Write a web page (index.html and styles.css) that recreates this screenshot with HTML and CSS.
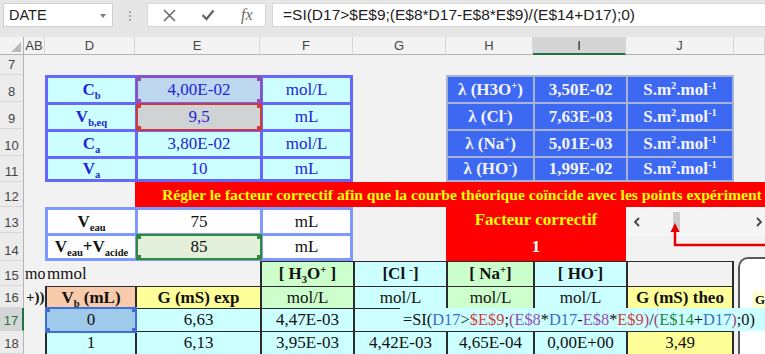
FILE: index.html
```html
<!DOCTYPE html>
<html lang="fr">
<head>
  <meta charset="UTF-8">
  <title>Dosage conductimétrique</title>
  <link rel="stylesheet" href="styles.css">
</head>
<body>

  <div class="toolbar">
    <div class="namebox">DATE<span class="caret"></span></div>
    <div class="grip"></div>
    <div class="fxbox">
      <svg class="ico-x" width="13" height="13" viewBox="0 0 13 13"><path d="M1 1L12 12M12 1L1 12" stroke="#666" stroke-width="1.5"/></svg>
      <svg class="ico-ok" width="14" height="12" viewBox="0 0 14 12"><path d="M1.5 6L5.5 10L12.5 1.5" stroke="#666" stroke-width="2.4" fill="none"/></svg>
      <span class="fx">fx</span>
    </div>
    <div class="formula">=SI(D17&gt;$E$9;(E$8*D17-E$8*E$9)/(E$14+D17);0)</div>
  </div>

  <div class="row head">
    <div class="corner"></div>
    <div class="ch">AB</div>
    <div class="ch">D</div>
    <div class="ch">E</div>
    <div class="ch">F</div>
    <div class="ch">G</div>
    <div class="ch">H</div>
    <div class="ch on">I</div>
    <div class="ch">J</div>
    <div class="ch"></div>
  </div>

  <div class="row h20">
    <div class="rh">7</div>
  </div>

  <div class="row h27">
    <div class="rh">8</div><div></div>
    <div class="c t1 lab"><span>C<sub>b</sub></span></div>
    <div class="c t1 hl hl-p">4,00E-02</div>
    <div class="c t1 r">mol/L</div>
    <div></div>
    <div class="c t2"><span>λ (H3O<sup>+</sup>)</span></div>
    <div class="c t2">3,50E-02</div>
    <div class="c t2 r"><span>S.m<sup>2</sup>.mol<sup>-1</sup></span></div>
  </div>

  <div class="row h27">
    <div class="rh">9</div><div></div>
    <div class="c t1 lab"><span>V<sub>b,eq</sub></span></div>
    <div class="c t1 hl hl-r">9,5</div>
    <div class="c t1 r">mL</div>
    <div></div>
    <div class="c t2"><span>λ (Cl<sup>-</sup>)</span></div>
    <div class="c t2">7,63E-03</div>
    <div class="c t2 r"><span>S.m<sup>2</sup>.mol<sup>-1</sup></span></div>
  </div>

  <div class="row h27">
    <div class="rh">10</div><div></div>
    <div class="c t1 lab"><span>C<sub>a</sub></span></div>
    <div class="c t1">3,80E-02</div>
    <div class="c t1 r">mol/L</div>
    <div></div>
    <div class="c t2"><span>λ (Na<sup>+</sup>)</span></div>
    <div class="c t2">5,01E-03</div>
    <div class="c t2 r"><span>S.m<sup>2</sup>.mol<sup>-1</sup></span></div>
  </div>

  <div class="row h26">
    <div class="rh">11</div><div></div>
    <div class="c t1 b lab"><span>V<sub>a</sub></span></div>
    <div class="c t1 b">10</div>
    <div class="c t1 r b">mL</div>
    <div></div>
    <div class="c t2 b"><span>λ (HO<sup>-</sup>)</span></div>
    <div class="c t2 b">1,99E-02</div>
    <div class="c t2 r b"><span>S.m<sup>2</sup>.mol<sup>-1</sup></span></div>
  </div>

  <div class="row h25">
    <div class="rh">12</div><div></div><div></div>
    <div class="band">Régler le facteur correctif afin que la courbe théorique coïncide avec les points expériment</div>
  </div>

  <div class="row h26">
    <div class="rh">13</div><div></div>
    <div class="c t3 lab"><span>V<sub>eau</sub></span></div>
    <div class="c t3">75</div>
    <div class="c t3 r">mL</div>
    <div></div>
    <div class="c red2 yel">Facteur correctif</div>
  </div>

  <div class="row h28">
    <div class="rh">14</div><div></div>
    <div class="c t3 b lab"><span>V<sub>eau</sub>+V<sub>acide</sub></span></div>
    <div class="c t3 b hl hl-g">85</div>
    <div class="c t3 r b">mL</div>
    <div></div>
    <div class="c red2 wht">1</div>
  </div>

  <div class="row h25">
    <div class="rh">15</div>
    <div class="c clip mo">mo</div>
    <div class="c left">mmol</div>
    <div></div>
    <div class="c d green lab"><span>[ H<sub>3</sub>O<sup>+</sup> ]</span></div>
    <div class="c d cyan lab"><span>[Cl <sup>-</sup>]</span></div>
    <div class="c d green lab"><span>[ Na<sup>+</sup>]</span></div>
    <div class="c d cyan lab"><span>[ HO<sup>-</sup>]</span></div>
    <div class="c d r"></div>
  </div>

  <div class="row h22">
    <div class="rh">16</div>
    <div class="c clip plus">+))<span class="tick"></span></div>
    <div class="c d orange lab"><span>V<sub>b</sub> (mL)</span></div>
    <div class="c d yellow lab">G (mS) exp</div>
    <div class="c d green">mol/L</div>
    <div class="c d cyan">mol/L</div>
    <div class="c d green">mol/L</div>
    <div class="c d cyan">mol/L</div>
    <div class="c d r yellow lab">G (mS) theo</div>
  </div>

  <div class="row h23">
    <div class="rh on">17</div><div></div>
    <div class="c d hl hl-b">0</div>
    <div class="c d cyan">6,63</div>
    <div class="c d cyan">4,47E-03</div>
    <div class="c d cyan"></div>
    <div class="c d cyan"></div>
    <div class="c d cyan"></div>
    <div class="c d r yellow"></div>
  </div>

  <div class="row h23">
    <div class="rh">18</div><div></div>
    <div class="c d cyan">1</div>
    <div class="c d cyan">6,13</div>
    <div class="c d cyan">3,95E-03</div>
    <div class="c d cyan">4,42E-03</div>
    <div class="c d cyan">4,65E-04</div>
    <div class="c d cyan">0,00E+00</div>
    <div class="c d r yellow">3,49</div>
  </div>

  <!-- form controls and objects lying over the sheet -->
  <div class="scroll">
    <svg class="chev" width="8" height="10" viewBox="0 0 8 10"><path d="M6 1L2 5L6 9" stroke="#444" stroke-width="1.8" fill="none"/></svg>
    <span class="thumb"></span>
    <svg class="chev" width="8" height="10" viewBox="0 0 8 10"><path d="M2 1L6 5L2 9" stroke="#444" stroke-width="1.8" fill="none"/></svg>
  </div>

  <svg class="arrow" width="97" height="26" viewBox="0 0 97 26">
    <polygon points="7,1 2.5,10 11.5,10" fill="#e80000"/>
    <path d="M7 9V23H97" stroke="#e80000" stroke-width="2.5" fill="none"/>
  </svg>

  <div class="chart">
    <div class="legend">G</div>
  </div>

  <div class="edit">=SI(<span class="rb">D17</span>&gt;<span class="rr">$E$9</span>;<span class="rq">(</span><span class="rp">E$8</span>*<span class="rb">D17</span>-<span class="rp">E$8</span>*<span class="rr">E$9</span><span class="rq">)</span>/<span class="rq">(</span><span class="rg">E$14</span>+<span class="rb">D17</span><span class="rq">)</span>;0)</div>

</body>
</html>
```

FILE: styles.css
```css
* {
  box-sizing: border-box;
}

body {
  margin: 0;
  width: 765px;
  height: 354px;
  overflow: hidden;
  position: relative;
  background: #f2f2f2;
  font-family: "Liberation Serif", "Times New Roman", serif;
  font-size: 17px;
  color: #111;
}

sub, sup {
  font-size: 0.62em;
  line-height: 0;
}
sub { vertical-align: -0.4em; }
sup { vertical-align: 0.6em; }

/* formula bar */
.toolbar {
  display: flex;
  height: 37px;
  padding: 3px 0 0 3px;
  background: #e6e6e6;
  font-family: "Liberation Sans", Arial, sans-serif;
}

.namebox {
  position: relative;
  width: 110px;
  height: 24px;
  padding-left: 5px;
  display: flex;
  align-items: center;
  background: #fff;
  border: 1px solid #cfcfcf;
  font-size: 14.5px;
  color: #222;
}

.caret {
  position: absolute;
  right: 6px;
  top: 10px;
  border: 3px solid transparent;
  border-top: 4px solid #7a7a7a;
}

.grip {
  width: 34px;
}
.grip::before {
  content: "";
  display: block;
  width: 2px;
  height: 2px;
  margin: 8px auto 0;
  background: #a9a9a9;
  box-shadow: 0 4px #a9a9a9, 0 8px #a9a9a9;
}

.fxbox {
  width: 119px;
  height: 24px;
  display: flex;
  align-items: center;
  padding-left: 15px;
  background: #fff;
  border: 1px solid #d6d6d6;
}
.ico-ok { margin-left: 25px; }
.fx {
  margin-left: 26px;
  font-family: "Liberation Serif", serif;
  font-style: italic;
  font-size: 16px;
  color: #6a6a6a;
}

.formula {
  flex: 1;
  height: 24px;
  margin-left: 6px;
  padding-left: 10px;
  display: flex;
  align-items: center;
  background: #fff;
  border: 1px solid #d6d6d6;
  border-right: 0;
  font-size: 15.5px;
  color: #222;
  white-space: nowrap;
}

/* sheet grid */
.row {
  display: grid;
  grid-template-columns: 24px 21px 90px 125px 93px 93px 87px 93px 108px 31px;
}
.head { height: 18px; background: #f3f3f3; }
.h20 { height: 20px; }
.h22 { height: 22px; }
.h23 { height: 23px; }
.h25 { height: 25px; }
.h26 { height: 26px; }
.h27 { height: 27px; }
.h28 { height: 28px; }

.corner {
  position: relative;
  background: #f3f3f3;
  border-right: 1px solid #b4b4b4;
  border-bottom: 1px solid #b4b4b4;
}
.corner::after {
  content: "";
  position: absolute;
  right: 2px;
  bottom: 2px;
  border-left: 10px solid transparent;
  border-bottom: 10px solid #b9b9b9;
}

.ch {
  display: flex;
  align-items: center;
  justify-content: center;
  border-right: 1px solid #d6d6d6;
  border-bottom: 1px solid #b4b4b4;
  font: 13px "Liberation Sans", Arial, sans-serif;
  color: #444;
}
.ch.on {
  background: #d5d5d5;
  border-bottom: 2px solid #217346;
  color: #262626;
}

.rh {
  display: flex;
  align-items: flex-end;
  justify-content: center;
  padding-bottom: 2px;
  background: #ececec;
  border-right: 1px solid #b4b4b4;
  border-bottom: 1px solid #d6d6d6;
  font: 13px "Liberation Sans", Arial, sans-serif;
  color: #444;
}
.rh.on {
  background: #d5d5d5;
  border-right: 2px solid #217346;
  color: #217346;
}

.c {
  display: flex;
  align-items: center;
  justify-content: center;
  white-space: nowrap;
}
.left { justify-content: flex-start; padding-left: 2px; }
.clip { overflow: hidden; justify-content: flex-start; }
.mo { font-size: 16px; padding-left: 1px; }
.lab { font-weight: bold; }

/* parameter tables */
.t1 {
  background: #ccffff;
  color: #2424d6;
  border: 0 solid #6767ff;
  border-width: 3px 0 0 3px;
}
.t1.r { border-right-width: 3px; }
.t1.b { border-bottom-width: 3px; }

.t2 {
  background: #3d68f2;
  color: #f4f4ff;
  font-weight: bold;
  border: 0 solid #a6b3d6;
  border-width: 2px 0 0 2px;
}
.t2.r { border-right-width: 2px; }
.t2.b { border-bottom-width: 2px; }

.t3 {
  background: #fff;
  border: 0 solid #7d99ff;
  border-width: 3px 0 0 3px;
}
.t3.r { border-right-width: 3px; }
.t3.b { border-bottom-width: 3px; }

.band {
  grid-column: span 7;
  display: flex;
  align-items: center;
  padding-left: 27px;
  overflow: hidden;
  white-space: nowrap;
  background: #ff0000;
  color: #ffff00;
  font-weight: bold;
  font-size: 15.6px;
}

.red2 {
  grid-column: span 2;
  background: #ff0000;
  font-weight: bold;
}
.yel { color: #ffff00; }
.wht { color: #fff; }

/* data table */
.d {
  border: 0 solid #2b2b2b;
  border-width: 1px 0 0 2px;
}
.d.r { border-right-width: 2px; }
.green { background: #ccffcc; }
.cyan { background: #ccffff; }
.yellow { background: #ffff99; }
.orange { background: #f8cbad; }

.plus {
  font-weight: bold;
  font-size: 15px;
  padding-left: 2px;
}
.tick {
  width: 6px;
  height: 14px;
  margin-left: 1px;
  border-left: 2px solid #222;
  background: linear-gradient(#222, #222) 0 50% / 100% 1px no-repeat;
}

/* formula references highlighted while editing */
.hl { position: relative; }
.hl::after {
  content: "";
  position: absolute;
  inset: -2px;
  border: 2px solid var(--hc);
  background:
    linear-gradient(var(--hc), var(--hc)) 0 0 / 5px 5px no-repeat,
    linear-gradient(var(--hc), var(--hc)) 100% 0 / 5px 5px no-repeat,
    linear-gradient(var(--hc), var(--hc)) 0 100% / 5px 5px no-repeat,
    linear-gradient(var(--hc), var(--hc)) 100% 100% / 5px 5px no-repeat;
  background-origin: border-box;
}
.hl-p { --hc: #8e4fbf; background: #bdd7ee; }
.hl-r { --hc: #d03a3a; background: #d0d3d3; }
.hl-g { --hc: #2e8b3e; background: #e2efda; }
.hl-b { --hc: #3f6fd6; background: #9fcaea; }

/* scroll bar control */
.scroll {
  position: absolute;
  left: 626px;
  top: 208px;
  width: 145px;
  height: 28px;
  display: flex;
  align-items: center;
  padding-left: 7px;
  background: #f5f5f5;
}
.thumb {
  width: 7px;
  height: 20px;
  margin: 0 75px 0 32px;
  background: #cdcdcd;
}

.arrow {
  position: absolute;
  left: 668px;
  top: 222px;
}

.chart {
  position: absolute;
  left: 738px;
  top: 257px;
  width: 40px;
  height: 110px;
  padding: 32px 0 0 13px;
  background: #fff;
  border: 2px solid #585858;
  border-radius: 10px;
}
.legend {
  width: 12px;
  height: 18px;
  padding-left: 2px;
  background: #ffffcc;
  font-weight: bold;
  font-size: 13px;
  line-height: 18px;
}

/* in-cell editing of I17 */
.edit {
  position: absolute;
  left: 400px;
  top: 308px;
  width: 365px;
  height: 23px;
  padding-left: 3px;
  line-height: 23px;
  background: #ccffff;
  font-size: 16.4px;
  white-space: nowrap;
}
.rb { color: #3a6fc8; }
.rr { color: #cf3f3f; }
.rp { color: #9550b5; }
.rg { color: #23883f; }
.rq { color: #a8447c; }
```
